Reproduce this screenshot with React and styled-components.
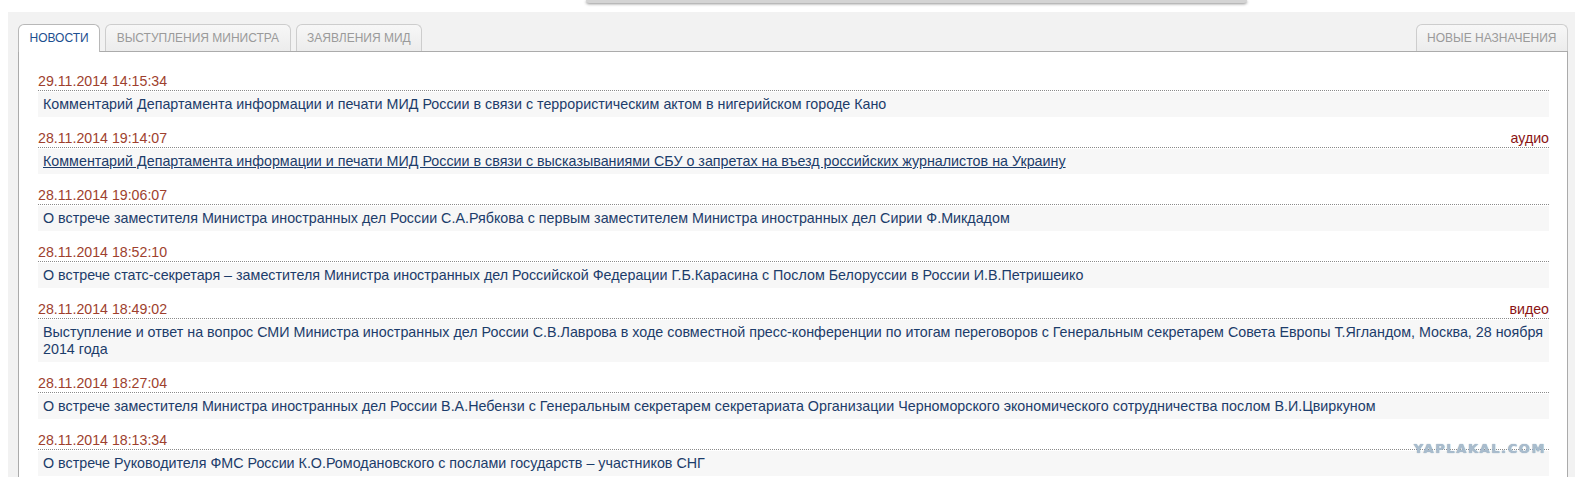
import React from 'react';
import styled, { createGlobalStyle } from 'styled-components';

const GlobalStyle = createGlobalStyle`
  body {
    margin: 0;
    background: #fff;
    font-family: Arial, "Liberation Sans", sans-serif;
    overflow: hidden;
  }
`;

const TopStrip = styled.div`
  height: 12px;
`;

const DropShadowBar = styled.div`
  margin-left: 586px;
  width: 661px;
  height: 3px;
  background: #d4d4d4;
  border-radius: 0 0 3px 3px;
  box-shadow: 0 1px 3px rgba(0, 0, 0, 0.45);
`;

const Band = styled.div`
  margin-left: 8px;
  background: #f2f2f2;
  padding: 12px 7px 0 10px;
  min-height: 465px;
  box-sizing: border-box;
  display: flex;
  flex-direction: column;
`;

const TabBar = styled.div`
  display: flex;
  align-items: flex-end;
  gap: 5px;
  border-bottom: 1px solid #ababab;
`;

const Tab = styled.div`
  height: 26px;
  line-height: 26px;
  padding: 0 10.5px;
  border: 1px solid ${p => (p.$active ? '#b8b8b8' : '#cdcdcd')};
  border-bottom: none;
  border-radius: 6px 6px 0 0;
  font-size: 12px;
  text-transform: uppercase;
  white-space: nowrap;
  color: ${p => (p.$active ? '#1d4f8f' : '#9a9a9a')};
  background: ${p =>
    p.$active ? '#fff' : 'linear-gradient(to bottom, #f7f7f7 0%, #ececec 100%)'};
  margin-bottom: ${p => (p.$active ? '-1px' : '0')};
  padding-bottom: ${p => (p.$active ? '1px' : '0')};
  margin-left: ${p => (p.$right ? 'auto' : '0')};
  cursor: pointer;
`;

const Panel = styled.div`
  flex: 1;
  background: #fff;
  border-left: 1px solid #ababab;
  border-right: 1px solid #ababab;
  padding: 22px 18px 0 19px;
  position: relative;
`;

const Item = styled.div`
  margin-bottom: 14px;
`;

const DateRow = styled.div`
  display: flex;
  justify-content: space-between;
  font-size: 14.2px;
  line-height: 15px;
  padding-bottom: 1px;
  border-bottom: 1px dotted #8a8a8a;
`;

const Stamp = styled.span`
  color: #9e3f2e;
`;

const Media = styled.span`
  color: #8a1414;
`;

const Headline = styled.a`
  display: block;
  margin-top: 1px;
  padding: 4px 5px;
  background: #f7f7f7;
  font-size: 14.3px;
  line-height: 17px;
  color: #1c3c6a;
  text-decoration: ${p => (p.$underline ? 'underline' : 'none')};
`;

const Watermark = styled.div`
  position: absolute;
  right: 21px;
  top: 389px;
  font-family: "DejaVu Sans", Verdana, sans-serif;
  font-weight: bold;
  font-size: 13px;
  letter-spacing: 1.6px;
  color: #a9bccd;
  text-shadow: 0 0 1px #7f98b0;
`;

const tabs = ['Новости', 'Выступления министра', 'Заявления МИД'];

const news = [
  {
    date: '29.11.2014 14:15:34',
    title:
      'Комментарий Департамента информации и печати МИД России в связи с террористическим актом в нигерийском городе Кано',
  },
  {
    date: '28.11.2014 19:14:07',
    media: 'аудио',
    underline: true,
    title:
      'Комментарий Департамента информации и печати МИД России в связи с высказываниями СБУ о запретах на въезд российских журналистов на Украину',
  },
  {
    date: '28.11.2014 19:06:07',
    title:
      'О встрече заместителя Министра иностранных дел России С.А.Рябкова с первым заместителем Министра иностранных дел Сирии Ф.Микдадом',
  },
  {
    date: '28.11.2014 18:52:10',
    title:
      'О встрече статс-секретаря – заместителя Министра иностранных дел Российской Федерации Г.Б.Карасина с Послом Белоруссии в России И.В.Петришеико',
  },
  {
    date: '28.11.2014 18:49:02',
    media: 'видео',
    title:
      'Выступление и ответ на вопрос СМИ Министра иностранных дел России С.В.Лаврова в ходе совместной пресс-конференции по итогам переговоров с Генеральным секретарем Совета Европы Т.Ягландом, Москва, 28 ноября 2014 года',
  },
  {
    date: '28.11.2014 18:27:04',
    title:
      'О встрече заместителя Министра иностранных дел России В.А.Небензи с Генеральным секретарем секретариата Организации Черноморского экономического сотрудничества послом В.И.Цвиркуном',
  },
  {
    date: '28.11.2014 18:13:34',
    title:
      'О встрече Руководителя ФМС России К.О.Ромодановского с послами государств – участников СНГ',
  },
];

export default function App() {
  return (
    <>
      <GlobalStyle />
      <TopStrip>
        <DropShadowBar />
      </TopStrip>
      <Band>
        <TabBar>
          {tabs.map((t, i) => (
            <Tab key={t} $active={i === 0}>
              {t}
            </Tab>
          ))}
          <Tab $right>Новые назначения</Tab>
        </TabBar>
        <Panel>
          {news.map(n => (
            <Item key={n.date}>
              <DateRow>
                <Stamp>{n.date}</Stamp>
                {n.media && <Media>{n.media}</Media>}
              </DateRow>
              <Headline href="#" $underline={n.underline}>
                {n.title}
              </Headline>
            </Item>
          ))}
          <Watermark>YAPLAKAL.COM</Watermark>
        </Panel>
      </Band>
    </>
  );
}
